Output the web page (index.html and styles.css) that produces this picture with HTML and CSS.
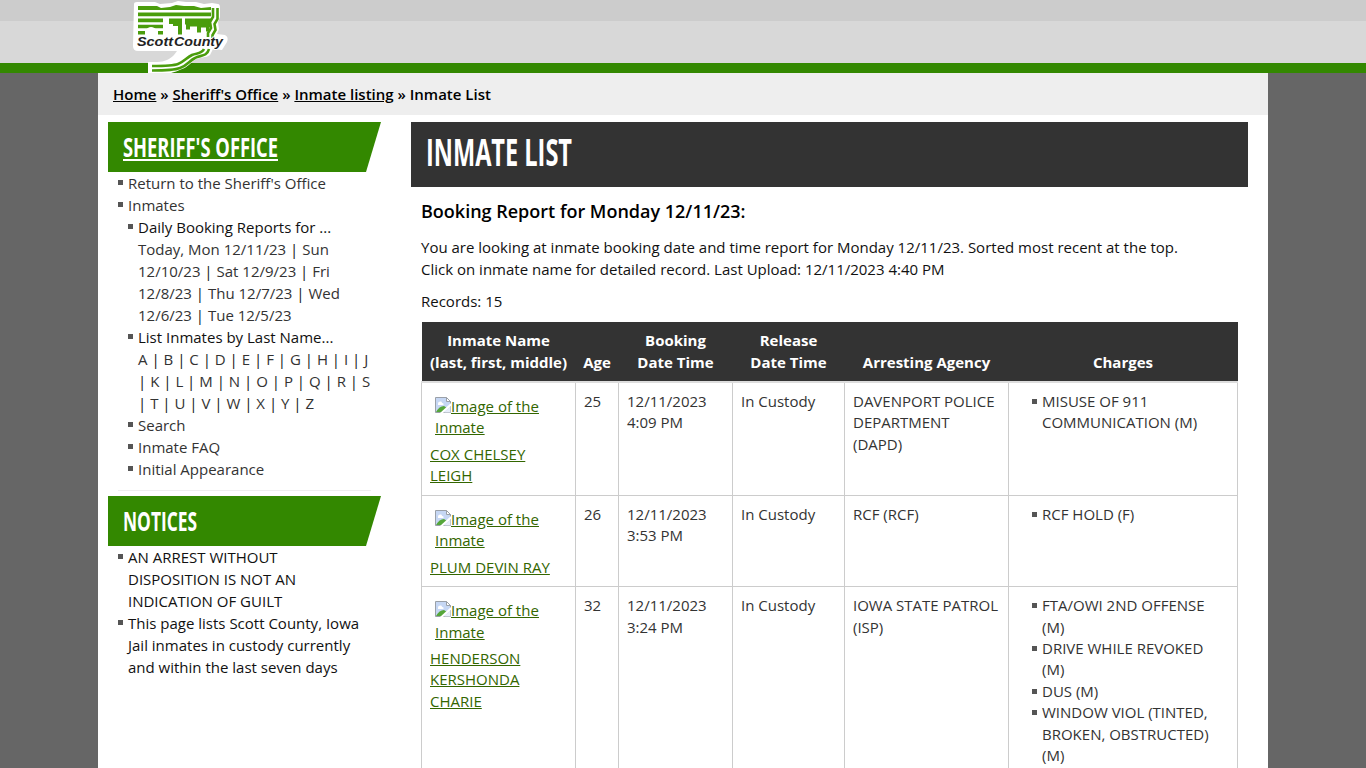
FILE: index.html
```
<!DOCTYPE html>
<html lang="en">
<head>
    <meta charset="utf-8">
    <title>Inmate List | Scott County, Iowa</title>
    <meta name="viewport" content="width=device-width, initial-scale=1.0">
    <link rel="stylesheet" href="styles.css">
</head>
<body>
    <svg class="sprite" aria-hidden="true">
        <symbol id="broken" viewBox="0 0 16 16">
            <path d="M.5 .5h11l4 4v11h-15z" fill="#c6d7f4" stroke="#9aa0a8"/>
            <path d="M11.5 .5v4h4z" fill="#fff" stroke="#9aa0a8"/>
            <path d="M3 7c0-3 4-3 4-1 2 0 2 2 1 2H3z" fill="#fff"/>
            <path d="M1 15c2-4 5-6 8-6l3 2-5 4z" fill="#55a63a"/>
            <path d="M5 16L16 6v3l-8 7z" fill="#fff"/>
            <path d="M9 15.500l6.500-6v6z" fill="#e8eefa"/>
        </symbol>
    </svg>

    <!-- Header -->
    <header class="site-header">
        <div class="header-inner">
            <a href="#" class="logo">
                <svg width="104" height="73" viewBox="0 0 104 73">
                    <path d="M4 4q0-2 3-2h18l5 2 12-1 6-2 8 1 10 0 8 2 8-1 6 1q2 0 2 4v9l-2 5 1 7-2 5 8 1q4 2 2 7l-5 8-9-1-3 6c-4 3-11 2-15 5-5 3-7 7-13 9-4 2-8 3-11 4H18V62h9c8 0 13-3 17-7l3-4H8q-5 0-5-5z" fill="#fff"/>
                    <g fill="#4a9d0c">
                        <path d="M8 6h19l4 2 9-1 6-2 8 1 10 0 7 2 10-1v3H8z"/>
                        <path d="M8 12.500h73v3.800H8z"/>
                        <path d="M8 18.500h25v3.800H8zM8 24.700h25v3.600H8zM8 31h9v3.500H8zM28 31h5v3.500h-5z"/>
                        <path d="M39 18.500h13v16h-4V26h-5v-2h-4z"/>
                        <path d="M55 18.500h26v9h-2v4h-3v-4h-5v5h-4v-6h-7v3h-4v-5h-1z"/>
                    </g>
                    <path d="M15 35v-4q5.500-8 13 0v4h-4v-3h-5v3z" fill="#fff"/>
                    <g fill="none" stroke="#4a9d0c" stroke-width="2.600">
                        <path d="M83 8v9l-3 5 1 6-3 5v4"/>
                        <path d="M87.500 8v11l-3 5 1 6-3 5v3"/>
                        <path d="M74 49c-2 5-8 4-12 6-6 3-8 7-14 9-5 2-12 2-26 2"/>
                        <path d="M79 49c-2 8-9 6-14 9-6 3-8 8-15 10-5 2-12 2.500-28 2.500"/>
                    </g>
                    <g class="logo-text">
                        <text x="7" y="46" textLength="36" lengthAdjust="spacingAndGlyphs">Scott</text>
                        <text x="44" y="46" textLength="49" lengthAdjust="spacingAndGlyphs">County</text>
                    </g>
                </svg>
            </a>
        </div>
    </header>

    <div class="page">
        <nav class="breadcrumb">
            <a href="#">Home</a> » <a href="#">Sheriff's Office</a> » <a href="#">Inmate listing</a> » Inmate List
        </nav>

        <div class="columns">
            <!-- Sidebar -->
            <aside class="sidebar">
                <h2 class="side-title"><a href="#"><svg width="155" height="28"><text x="0" y="26" textLength="155" lengthAdjust="spacingAndGlyphs">SHERIFF'S OFFICE</text></svg></a></h2>
                <ul class="menu">
                    <li><a href="#">Return to the Sheriff's Office</a></li>
                    <li><a href="#">Inmates</a>
                        <ul>
                            <li>Daily Booking Reports for ...<br>
                                <a href="#">Today, Mon 12/11/23</a> | <a href="#">Sun 12/10/23</a> | <a href="#">Sat 12/9/23</a> | <a href="#">Fri 12/8/23</a> | <a href="#">Thu 12/7/23</a> | <a href="#">Wed 12/6/23</a> | <a href="#">Tue 12/5/23</a></li>
                            <li>List Inmates by Last Name...<br>
                                <a href="#">A</a> | <a href="#">B</a> | <a href="#">C</a> | <a href="#">D</a> | <a href="#">E</a> | <a href="#">F</a> | <a href="#">G</a> | <a href="#">H</a> | <a href="#">I</a> | <a href="#">J</a><br>| <a href="#">K</a> | <a href="#">L</a> | <a href="#">M</a> | <a href="#">N</a> | <a href="#">O</a> | <a href="#">P</a> | <a href="#">Q</a> | <a href="#">R</a> | <a href="#">S</a><br>| <a href="#">T</a> | <a href="#">U</a> | <a href="#">V</a> | <a href="#">W</a> | <a href="#">X</a> | <a href="#">Y</a> | <a href="#">Z</a></li>
                            <li><a href="#">Search</a></li>
                            <li><a href="#">Inmate FAQ</a></li>
                            <li><a href="#">Initial Appearance</a></li>
                        </ul>
                    </li>
                </ul>
                <hr>
                <h2 class="side-title"><svg width="76" height="28"><text x="0" y="26" textLength="74" lengthAdjust="spacingAndGlyphs">NOTICES</text></svg></h2>
                <ul class="menu">
                    <li>AN ARREST WITHOUT DISPOSITION IS NOT AN INDICATION OF GUILT</li>
                    <li>This page lists Scott County, Iowa Jail inmates in custody currently and within the last seven days</li>
                </ul>
            </aside>

            <!-- Main content -->
            <main class="content">
                <h1><svg width="150" height="45"><text x="0" y="34" textLength="146" lengthAdjust="spacingAndGlyphs">INMATE LIST</text></svg></h1>
                <div class="report">
                    <h3>Booking Report for Monday 12/11/23:</h3>
                    <p>You are looking at inmate booking date and time report for Monday 12/11/23. Sorted most recent at the top.<br>Click on inmate name for detailed record. Last Upload: 12/11/2023 4:40 PM</p>
                    <p>Records: 15</p>
                    <table>
                        <colgroup>
                            <col class="c-name"><col class="c-age"><col class="c-booked"><col class="c-release"><col class="c-agency"><col class="c-charges">
                        </colgroup>
                        <thead>
                            <tr>
                                <th>Inmate Name<br>(last, first, middle)</th>
                                <th>Age</th>
                                <th>Booking<br>Date Time</th>
                                <th>Release<br>Date Time</th>
                                <th>Arresting Agency</th>
                                <th>Charges</th>
                            </tr>
                        </thead>
                        <tbody>
                            <tr>
                                <td><a href="#"><span class="photo"><svg class="broken"><use href="#broken"/></svg>Image of the Inmate</span>COX CHELSEY LEIGH</a></td>
                                <td>25</td>
                                <td>12/11/2023 4:09 PM</td>
                                <td>In Custody</td>
                                <td>DAVENPORT POLICE DEPARTMENT (DAPD)</td>
                                <td><ul><li>MISUSE OF 911 COMMUNICATION (M)</li></ul></td>
                            </tr>
                            <tr>
                                <td><a href="#"><span class="photo"><svg class="broken"><use href="#broken"/></svg>Image of the Inmate</span>PLUM DEVIN RAY</a></td>
                                <td>26</td>
                                <td>12/11/2023 3:53 PM</td>
                                <td>In Custody</td>
                                <td>RCF (RCF)</td>
                                <td><ul><li>RCF HOLD (F)</li></ul></td>
                            </tr>
                            <tr>
                                <td><a href="#"><span class="photo"><svg class="broken"><use href="#broken"/></svg>Image of the Inmate</span>HENDERSON KERSHONDA CHARIE</a></td>
                                <td>32</td>
                                <td>12/11/2023 3:24 PM</td>
                                <td>In Custody</td>
                                <td>IOWA STATE PATROL (ISP)</td>
                                <td>
                                    <ul>
                                        <li>FTA/OWI 2ND OFFENSE (M)</li>
                                        <li>DRIVE WHILE REVOKED (M)</li>
                                        <li>DUS (M)</li>
                                        <li>WINDOW VIOL (TINTED, BROKEN, OBSTRUCTED) (M)</li>
                                    </ul>
                                </td>
                            </tr>
                        </tbody>
                    </table>
                </div>
            </main>
        </div>
    </div>
</body>
</html>
```
FILE: styles.css
```
* {
    box-sizing: border-box;
}
html {
    overflow: hidden;
}
body {
    margin: 0;
    height: 768px;
    overflow: hidden;
    background: #666;
    color: #111;
    font-family: 'Open Sans', 'Noto Sans', sans-serif;
    font-size: 15px;
    line-height: 22px;
}
a {
    color: inherit;
}
ul {
    list-style: none;
    margin: 0;
    padding: 0;
}
svg {
    display: block;
}
.sprite {
    display: none;
}
/* Header */
.site-header {
    height: 73px;
    background: linear-gradient(#ccc 21px, #d8d8d8 21px);
    border-bottom: 10px solid #380;
}
.header-inner {
    width: 1170px;
    margin: 0 auto;
    padding-left: 32px;
}
.logo {
    display: block;
    width: 104px;
    height: 63px;
}
.logo-text {
    font: italic bold 13.5px 'Liberation Sans', Arial, sans-serif;
    fill: #222;
    stroke: #fff;
    stroke-width: 2px;
    paint-order: stroke;
}
/* Page */
.page {
    width: 1170px;
    height: 695px;
    margin: 0 auto;
    background: #fff;
    overflow: hidden;
}
.breadcrumb {
    height: 42px;
    padding: 10px 15px;
    background: #eee;
    color: #000;
    font-weight: 600;
}
.columns {
    display: flex;
    gap: 30px;
    padding: 7px 20px 0 10px;
}
/* Sidebar */
.sidebar {
    width: 273px;
    flex: none;
}
.side-title {
    height: 50px;
    margin: 0;
    padding: 9px 15px;
    background: #380;
    clip-path: polygon(0 0, 100% 0, 258px 100%, 0 100%);
}
.side-title a {
    display: inline-block;
    border-bottom: 2px solid #fff;
    height: 30px;
}
.side-title svg,
h1 svg {
    font-family: 'Open Sans', sans-serif;
    font-weight: 700;
    fill: #fff;
    overflow: visible;
}
.side-title svg {
    font-size: 27px;
}
.menu {
    padding: 0 8px 0 10px;
}
.menu li,
td li {
    padding-left: 10px;
    background: linear-gradient(#555, #555) 0 8px / 5px 5px no-repeat;
}
.menu a {
    color: #333;
    text-decoration: none;
}
.sidebar hr {
    height: 1px;
    margin: 9px 10px 5px;
    border: 0;
    background: #eee;
}
.sidebar .menu:first-of-type {
    padding-bottom: 1px;
}
/* Content */
.content {
    width: 837px;
}
h1 {
    height: 65px;
    margin: 0;
    padding: 10px 15px;
    background: #333;
}
h1 svg {
    font-size: 37px;
}
.report {
    padding: 0 10px;
}
h3 {
    margin: 13px 0 14px;
    color: #000;
    font-size: 18px;
    font-weight: 600;
    line-height: 22px;
}
p {
    margin: 0 0 10px;
}
/* Inmate table */
table {
    width: 817px;
    table-layout: fixed;
    border-collapse: collapse;
    line-height: 21.43px;
}
.c-name { width: 154px; }
.c-age { width: 43px; }
.c-booked { width: 114px; }
.c-release { width: 112px; }
.c-agency { width: 164px; }
.c-charges { width: 229px; }
th {
    height: 59px;
    padding: 7px 0 8px;
    background: #333;
    border-bottom: 2px solid #ddd;
    color: #fff;
    line-height: 22px;
    vertical-align: bottom;
}
td {
    padding: 8px;
    border: 1px solid #ccc;
    color: #333;
    vertical-align: top;
}
td a {
    color: #360;
}
td li {
    background-position: 0 8px;
}
td ul {
    padding: 0 15px;
}
.photo {
    display: block;
    margin: 5px 5px 5px;
    text-decoration: underline;
}
.broken {
    display: inline-block;
    width: 16px;
    height: 16px;
    vertical-align: -1px;
}
```
